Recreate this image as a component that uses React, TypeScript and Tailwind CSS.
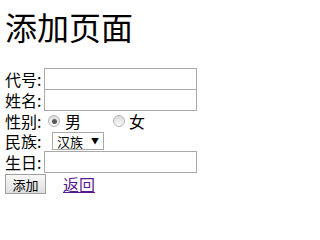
const cjk = "font-['Noto_Sans_CJK_SC','Noto_Sans',sans-serif]";

function Label({ children }: { children: React.ReactNode }) {
  return <span className="w-[39px] shrink-0 text-[16px] leading-none whitespace-nowrap">{children}</span>;
}

function TextBox() {
  return <span className="block h-[22px] w-[153px] border border-[#a9a9a9] bg-white" />;
}

function Radio({ checked = false }: { checked?: boolean }) {
  return (
    <span className="flex size-[12px] items-center justify-center rounded-full border border-[#b4b4b4] bg-gradient-to-b from-[#dcdcdc] to-[#f8f8f8]">
      {checked ? <span className="size-[5px] rounded-full bg-[#5a5a5a]" /> : null}
    </span>
  );
}

export default function App() {
  return (
    <div className={`h-[231px] w-[313px] bg-white pl-[5px] text-black ${cjk}`}>
      <h1 className="pt-[9px] text-[32px] font-normal leading-[34px]">添加页面</h1>
      <div className="mt-[25px] flex flex-col">
        <div className="flex h-[22px] items-center">
          <Label>代号:</Label>
          <TextBox />
        </div>
        <div className="-mt-px flex h-[22px] items-center">
          <Label>姓名:</Label>
          <TextBox />
        </div>
        <div className="flex h-[20px] items-center">
          <Label>性别:</Label>
          <span className="ml-[4px]"><Radio checked /></span>
          <span className="ml-[5px] text-[16px] leading-none">男</span>
          <span className="ml-[32px]"><Radio /></span>
          <span className="ml-[4px] text-[16px] leading-none">女</span>
        </div>
        <div className="flex h-[20px] items-center">
          <Label>民族:</Label>
          <span className="ml-[8px] flex h-[18px] w-[52px] items-center border border-[#a9a9a9] bg-white pl-[4px] text-[13px] leading-none">
            汉族
            <span className="ml-[8px] text-[8px]">▼</span>
          </span>
        </div>
        <div className="flex h-[22px] items-center">
          <Label>生日:</Label>
          <TextBox />
        </div>
        <div className="mt-px flex h-[20px] items-center">
          <button type="button" className="flex h-[20px] w-[41px] items-center justify-center border border-[#a0a0a0] bg-gradient-to-b from-[#f8f8f8] to-[#dedede] text-[13px] leading-none">
            添加
          </button>
          <a href="#" className="ml-[17px] text-[16px] leading-none text-[#551a8b] underline">返回</a>
        </div>
      </div>
    </div>
  );
}
